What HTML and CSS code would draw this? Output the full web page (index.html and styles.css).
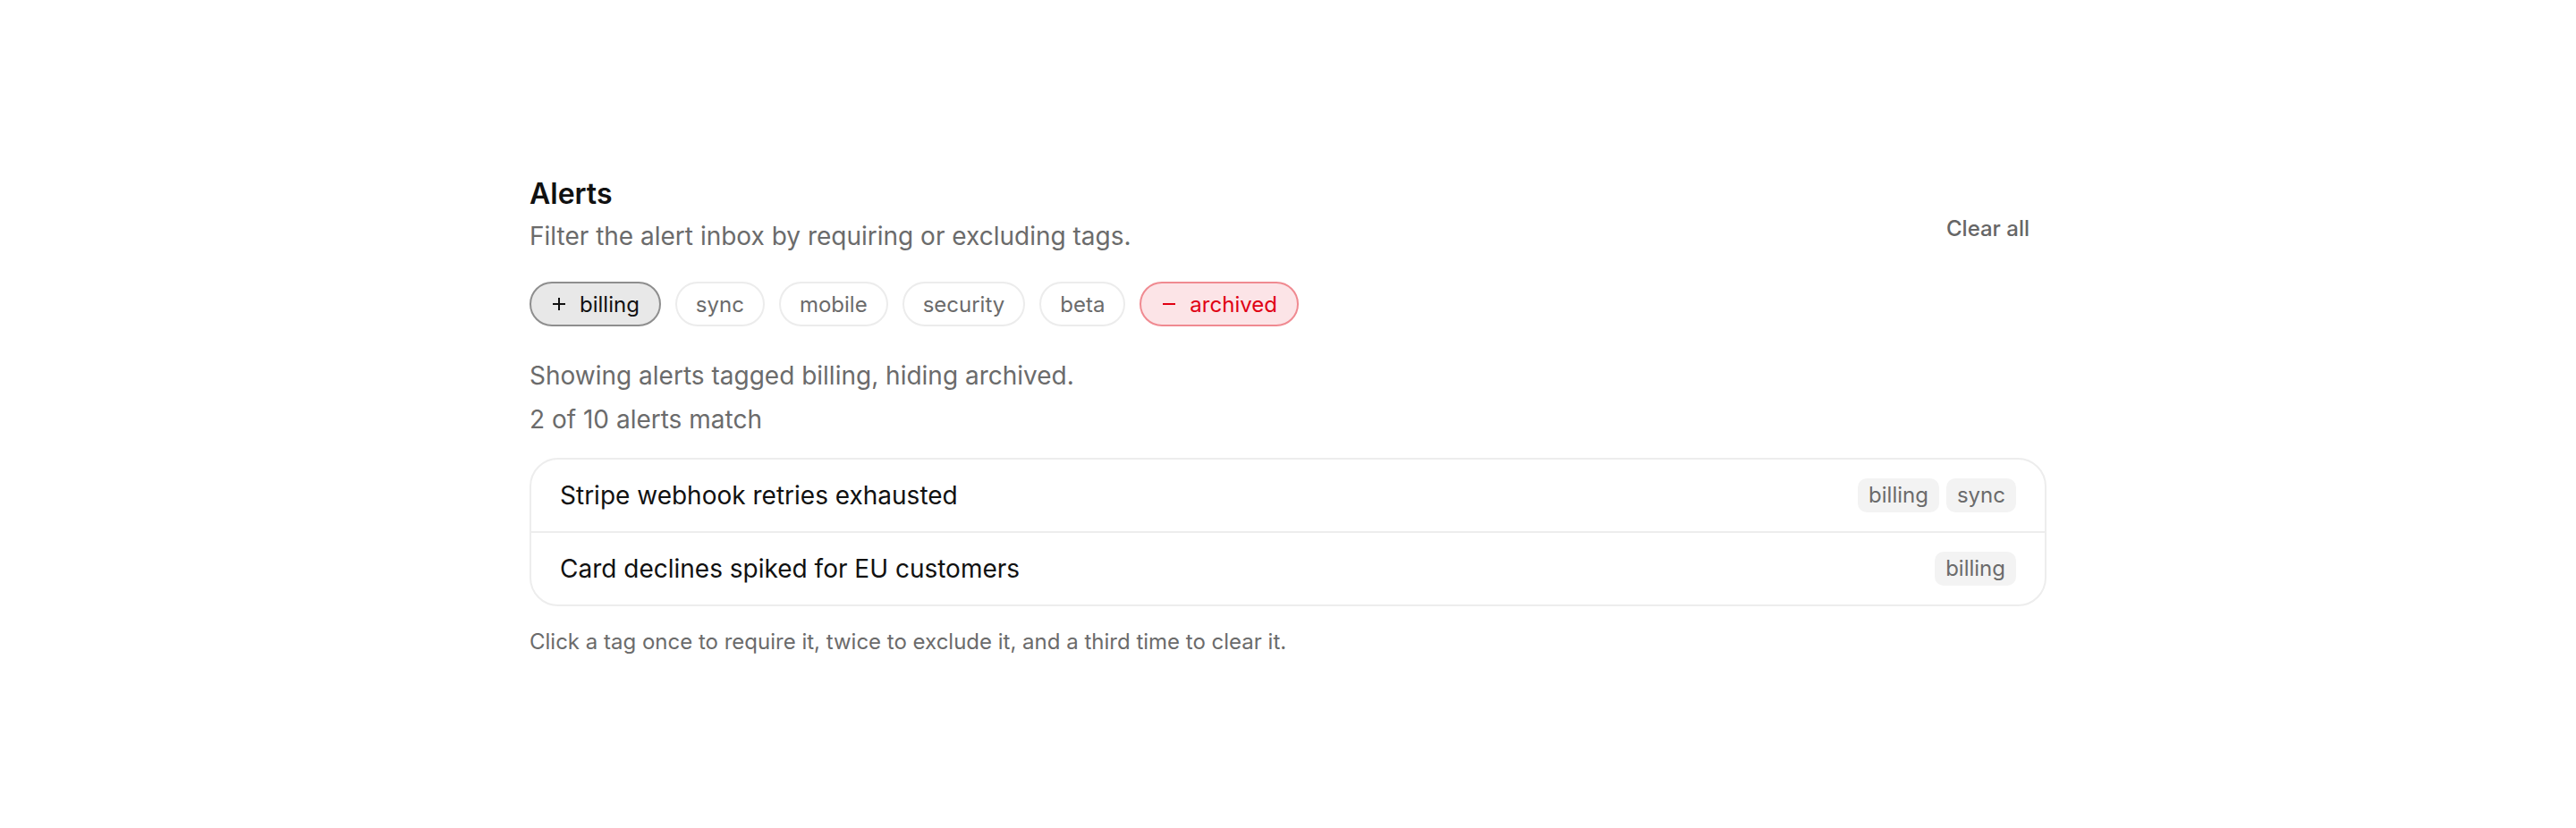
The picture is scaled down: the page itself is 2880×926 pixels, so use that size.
FILE: index.html
```html
<!DOCTYPE html>
<html lang="en">
<head>
<meta charset="utf-8">
<title>Alerts</title>
<link rel="stylesheet" href="styles.css">
</head>
<body>
<main class="page">
  <section class="panel">
    <header class="head">
      <div class="head-text">
        <h1 class="title">Alerts</h1>
        <p class="subtitle">Filter the alert inbox by requiring or excluding tags.</p>
      </div>
      <button class="clear" type="button">Clear all</button>
    </header>

    <div class="chips">
      <button class="chip chip-on" type="button">
        <svg class="chip-icon" viewBox="0 0 18 18" aria-hidden="true"><path d="M9 2v14M2 9h14"/></svg>
        <span>billing</span>
      </button>
      <button class="chip" type="button"><span>sync</span></button>
      <button class="chip" type="button"><span>mobile</span></button>
      <button class="chip" type="button"><span>security</span></button>
      <button class="chip" type="button"><span>beta</span></button>
      <button class="chip chip-off" type="button">
        <svg class="chip-icon" viewBox="0 0 18 18" aria-hidden="true"><path d="M2 9h14"/></svg>
        <span>archived</span>
      </button>
    </div>

    <p class="status">Showing alerts tagged billing, hiding archived.</p>
    <p class="count">2 of 10 alerts match</p>

    <ul class="list">
      <li class="row">
        <span class="row-title">Stripe webhook retries exhausted</span>
        <span class="tags"><span class="tag">billing</span><span class="tag">sync</span></span>
      </li>
      <li class="row">
        <span class="row-title">Card declines spiked for EU customers</span>
        <span class="tags"><span class="tag">billing</span></span>
      </li>
    </ul>

    <p class="hint">Click a tag once to require it, twice to exclude it, and a third time to clear it.</p>
  </section>
</main>
</body>
</html>
```

FILE: styles.css
```css
* { box-sizing: border-box; }

html, body {
  margin: 0;
  padding: 0;
  background: #ffffff;
}

body {
  font-family: Inter, "Noto Sans", "Liberation Sans", sans-serif;
  color: #111111;
}

.page {
  display: flex;
  justify-content: center;
  padding-top: 197px;
}

.panel {
  width: 1696px;
  display: flex;
  flex-direction: column;
}

.head {
  display: flex;
  justify-content: space-between;
  align-items: flex-end;
}

.title {
  margin: 0;
  font-size: 32px;
  line-height: 40px;
  font-weight: 600;
  color: #111111;
}

.subtitle {
  margin: 6px 0 0;
  font-size: 28px;
  line-height: 42px;
  color: #6b6b6b;
}

.clear {
  font: inherit;
  font-size: 24px;
  font-weight: 500;
  line-height: 36px;
  color: #666666;
  background: none;
  border: 0;
  padding: 0 19px;
  margin-bottom: 11px;
  cursor: pointer;
}

.chips {
  display: flex;
  gap: 16px;
  margin-top: 30px;
}

.chip {
  display: inline-flex;
  align-items: center;
  gap: 14px;
  height: 50px;
  padding: 0 21px;
  font: inherit;
  font-size: 24px;
  color: #6b6b6b;
  background: #ffffff;
  border: 2px solid #ececec;
  border-radius: 999px;
}

.chip-icon {
  width: 18px;
  height: 18px;
  fill: none;
  stroke: currentColor;
  stroke-width: 2;
}

.chip-on {
  padding: 0 22px;
  background: #e8e8e8;
  border-color: #8e8e8e;
  color: #111111;
}

.chip-off {
  padding: 0 22px;
  background: #fce4e7;
  border-color: #f08a91;
  color: #e00013;
}

.status {
  margin: 34px 0 0;
  font-size: 28px;
  line-height: 42px;
  color: #6b6b6b;
}

.count {
  margin: 7px 0 0;
  font-size: 28px;
  line-height: 42px;
  color: #6b6b6b;
}

.list {
  list-style: none;
  margin: 22px 0 0;
  padding: 0;
  border: 2px solid #ededed;
  border-radius: 32px;
}

.row {
  display: flex;
  justify-content: space-between;
  align-items: center;
  padding: 19px 32px;
  min-height: 80px;
}

.row + .row {
  border-top: 2px solid #ededed;
}

.row-title {
  font-size: 28px;
  line-height: 42px;
  color: #111111;
}

.tags {
  display: flex;
  gap: 8px;
}

.tag {
  font-size: 24px;
  line-height: 30px;
  padding: 4px 12px;
  border-radius: 10px;
  background: #f3f3f3;
  color: #6b6b6b;
}

.hint {
  margin: 22px 0 0;
  font-size: 24px;
  line-height: 36px;
  color: #6b6b6b;
}
```
